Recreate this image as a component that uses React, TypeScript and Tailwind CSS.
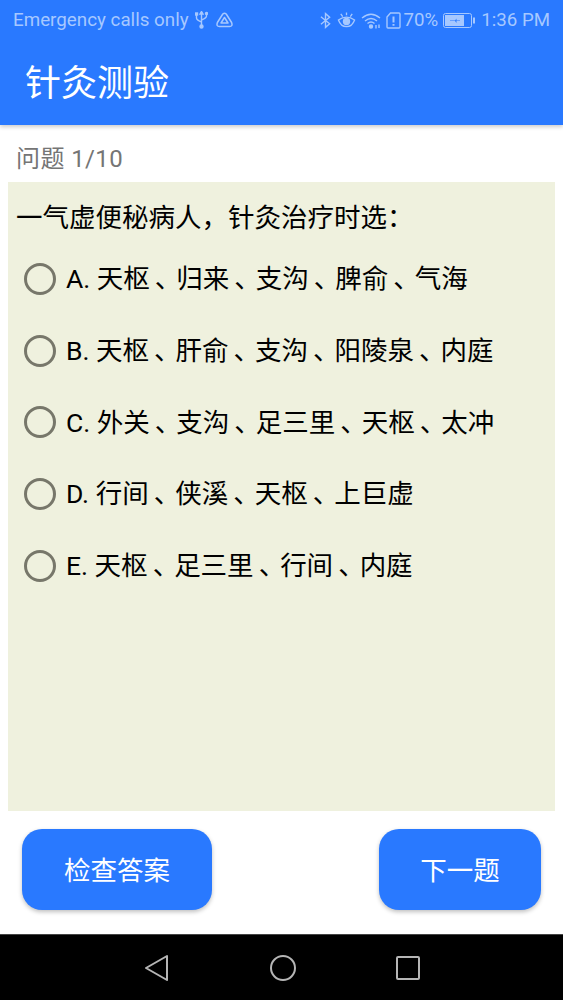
const font = { fontFamily: '"Roboto", "Noto Sans CJK SC", sans-serif' };

const options = [
  "A. 天枢、归来、支沟、脾俞、气海",
  "B. 天枢、肝俞、支沟、阳陵泉、内庭",
  "C. 外关、支沟、足三里、天枢、太冲",
  "D. 行间、侠溪、天枢、上巨虚",
  "E. 天枢、足三里、行间、内庭",
];

function StatusLeft() {
  return (
    <div className="flex items-center text-[18.8px] leading-[20px] text-[#a6c8ff]">
      <span>Emergency calls only</span>
      <svg className="ml-[6px]" width="13" height="18" viewBox="0 0 13 18" fill="none" stroke="#a6c8ff" strokeWidth="1.4">
        <path d="M6.500 1v15M1.500 4v3q0 2 5 4M11.500 3v2q0 2-5 4" />
        <path d="M5 3h3L6.500 .5Z" fill="#a6c8ff" />
        <rect x="0.500" y="2" width="2" height="2" fill="#a6c8ff" />
        <circle cx="11.500" cy="2.500" r="1" fill="#a6c8ff" />
        <circle cx="6.500" cy="15.500" r="1.500" fill="#a6c8ff" />
      </svg>
      <svg className="ml-[8px]" width="17" height="16" viewBox="0 0 17 16" fill="none" stroke="#a6c8ff" strokeWidth="1.500" strokeLinejoin="round">
        <path d="M6.800 2Q8.500 .5 10.200 2L15.600 10.500Q17 14.500 13.500 14.500H3.500Q0 14.500 1.400 10.500Z" />
        <path d="M8.500 5.500 12 11H5Z" />
      </svg>
    </div>
  );
}

function StatusRight() {
  return (
    <div className="flex items-center text-[18.7px] leading-[20px] text-[#a6c8ff]">
      <svg width="11" height="17" viewBox="0 0 12 17" fill="none" stroke="#a6c8ff" strokeWidth="1.500">
        <path d="M1 4.500 10.500 12 6 16V1l4.500 4L1 12.500" />
      </svg>
      <svg className="ml-[6px]" width="19" height="17" viewBox="0 0 20 17" fill="none" stroke="#a6c8ff" strokeWidth="1.400">
        <path d="M1.500 8Q10 2 18.500 8 16 15 10 15T1.500 8Z" />
        <circle cx="10" cy="9.500" r="3.200" fill="#a6c8ff" />
        <path d="M4 1.500 6 4.500M16 1.500 14 4.500M10 0V3" />
      </svg>
      <svg className="ml-[5px]" width="21" height="17" viewBox="0 0 21 17" fill="none" stroke="#a6c8ff" strokeWidth="1.400">
        <path d="M1 6Q10-1.500 19 6M4 9Q10 4 16 9M6.500 11.500Q10 8.500 13.500 11.500" />
        <circle cx="10" cy="14.500" r="1.500" fill="#a6c8ff" />
        <path d="M15 13v3.500M18 12.500v3.500" />
      </svg>
      <svg className="ml-[4px]" width="15" height="17" viewBox="0 0 15 17" fill="none" stroke="#a6c8ff" strokeWidth="1.400">
        <path d="M4.500 1H13a1 1 0 0 1 1 1v13a1 1 0 0 1-1 1H2a1 1 0 0 1-1-1V5Z" />
        <path d="M7.500 4.500v6M7.500 12v1.800" strokeWidth="2" />
      </svg>
      <span className="ml-[3px]">70%</span>
      <svg className="ml-[5px]" width="32" height="15" viewBox="0 0 32 15" fill="none">
        <rect x="0.500" y="0.500" width="28" height="14" rx="2" stroke="#a6c8ff" strokeWidth="1" />
        <rect x="2" y="2" width="19" height="11" fill="#a6c8ff" />
        <rect x="30" y="4.500" width="2" height="6" fill="#a6c8ff" />
        <path d="M7 7.500h5l1.500-2v2H17v.5h-3.500v2L12 8H7Z" fill="#2979ff" />
      </svg>
      <span className="ml-[6px]">1:36 PM</span>
    </div>
  );
}

function Radio() {
  return <span className="h-[32px] w-[32px] shrink-0 rounded-full border-[3px] border-[#77776a]" />;
}

function OptionText({ text }: { text: string }) {
  const parts = text.split("、");
  return (
    <span className="ml-[10px]">
      {parts.map((p, i) => (
        <span key={i}>
          {p}
          {i < parts.length - 1 && <span className="ml-[5px] tracking-[-5px]">、</span>}
        </span>
      ))}
    </span>
  );
}

function ActionButton({ label, width }: { label: string; width: string }) {
  return (
    <button className={`h-[81px] ${width} rounded-[20px] bg-[#2979ff] pt-[2px] text-[26.5px] text-white shadow-[0_2px_4px_rgba(0,0,0,0.25)]`}>
      {label}
    </button>
  );
}

export default function App() {
  return (
    <div className="flex h-[1000px] w-[563px] flex-col overflow-hidden bg-white" style={font}>
      <header className="z-10 h-[125px] shrink-0 bg-[#2979ff] shadow-[0_2px_4px_rgba(0,0,0,0.2)]">
        <div className="flex h-[40px] items-center justify-between pl-[13px] pr-[13px]">
          <StatusLeft />
          <StatusRight />
        </div>
        <h1 className="pl-[25px] pt-[4px] text-[36px] leading-[80px] text-white">针灸测验</h1>
      </header>
      <div className="flex h-[57px] shrink-0 items-center pl-[16px] pt-[11px] text-[24px] leading-[30px] tracking-[0.4px] text-[#757575]">问题 1/10</div>
      <main className="mx-[8px] h-[629px] shrink-0 bg-[#eff1de]">
        <p className="pl-[8px] pt-[21px] text-[26.5px] leading-[30px] text-black">一气虚便秘病人，针灸治疗时选：</p>
        <ul className="mt-[10px] flex flex-col">
          {options.map((o) => (
            <li key={o} className="flex h-[71.75px] items-center pl-[16px] text-[26.5px] text-black">
              <Radio />
              <OptionText text={o} />
            </li>
          ))}
        </ul>
      </main>
      <div className="flex flex-1 items-start justify-between pl-[22px] pr-[22px] pt-[18px]">
        <ActionButton label="检查答案" width="w-[190px]" />
        <ActionButton label="下一题" width="w-[162px]" />
      </div>
      <nav className="flex h-[66px] shrink-0 items-center justify-center gap-[100px] border-t border-[#444] bg-black">
        <svg width="26" height="28" viewBox="0 0 26 28" fill="none" stroke="#b5b5b5" strokeWidth="2" strokeLinejoin="round">
          <path d="M23 2 2 14 23 26Z" />
        </svg>
        <svg width="26" height="26" viewBox="0 0 26 26" fill="none" stroke="#b5b5b5" strokeWidth="2">
          <circle cx="13" cy="13" r="12" />
        </svg>
        <svg width="24" height="24" viewBox="0 0 24 24" fill="none" stroke="#b5b5b5" strokeWidth="2" strokeLinejoin="round">
          <rect x="1" y="1" width="22" height="22" rx="1" />
        </svg>
      </nav>
    </div>
  );
}
